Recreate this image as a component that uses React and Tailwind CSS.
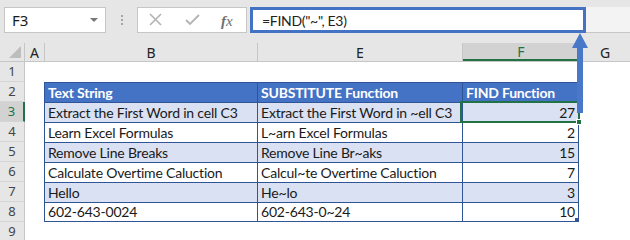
import React from "react";

const rows = [
  { n: 3, b: "Extract the First Word in cell C3", e: "Extract the First Word in ~ell C3", f: 27 },
  { n: 4, b: "Learn Excel Formulas", e: "L~arn Excel Formulas", f: 2 },
  { n: 5, b: "Remove Line Breaks", e: "Remove Line Br~aks", f: 15 },
  { n: 6, b: "Calculate Overtime Caluction", e: "Calcul~te Overtime Caluction", f: 7 },
  { n: 7, b: "Hello", e: "He~lo", f: 3 },
  { n: 8, b: "602-643-0024", e: "602-643-0~24", f: 10 },
];

const hdrFont = { fontFamily: "'Noto Sans', 'DejaVu Sans', sans-serif" };
const cellFont = { fontFamily: "Lato, 'Liberation Sans', sans-serif" };

function RowHeader({ n, active }) {
  return (
    <div
      className={
        "w-[25px] shrink-0 h-full flex items-center justify-center text-[13px] border-b border-[#d4d4d4] " +
        (active
          ? "bg-[#d2d2d2] text-[#217346] border-r-2 border-r-[#217346]"
          : "bg-[#e6e6e6] text-[#444] border-r border-r-[#c6c6c6]")
      }
      style={hdrFont}
    >
      {n}
    </div>
  );
}

function Cell({ children, className = "", last }) {
  return (
    <div
      className={
        "h-full shrink-0 border-l border-t border-[#2f5597] flex items-end px-[3px] pb-[1px] text-[14px] tracking-[-0.2px] leading-[17px] whitespace-nowrap overflow-hidden " +
        (last ? "border-b " : "") +
        className
      }
      style={cellFont}
    >
      {children}
    </div>
  );
}

export default function App() {
  return (
    <div className="relative w-[630px] h-[240px] overflow-hidden bg-white text-[#1a1a1a]">
      {/* formula bar */}
      <div className="h-[43px] bg-[#e6e6e6] flex items-start pt-[7px] pl-[4px]">
        <div
          className="w-[102px] h-[26px] bg-white border border-[#c6c6c6] flex items-center justify-between pl-[7px] pr-[7px] text-[15px]"
          style={hdrFont}
        >
          <span>F3</span>
          <span className="w-0 h-0 border-l-[4px] border-r-[4px] border-t-[4px] border-l-transparent border-r-transparent border-t-[#777]" />
        </div>
        <div className="w-[31px] h-[26px] flex flex-col items-center justify-center gap-[2px]">
          <span className="w-[2px] h-[2px] bg-[#a6a6a6]" />
          <span className="w-[2px] h-[2px] bg-[#a6a6a6]" />
          <span className="w-[2px] h-[2px] bg-[#a6a6a6]" />
        </div>
        <div className="w-[110px] h-[26px] bg-white border border-[#c6c6c6] flex items-center relative">
          <svg width="80" height="24" viewBox="0 0 80 24">
            <path d="M12 6 L23 17 M23 6 L12 17" stroke="#b3b3b3" strokeWidth="1.6" fill="none" />
            <path d="M48 12 L52 16 L61 7" stroke="#b3b3b3" strokeWidth="1.8" fill="none" />
          </svg>
          <span
            className="absolute left-[83px] top-[2px] text-[15px] italic text-[#6f6f6f]"
            style={{ fontFamily: "'Liberation Serif', serif" }}
          >
            <b>f</b>x
          </span>
        </div>
        <div className="w-[3px]" />
        <div
          className="w-[336px] h-[26px] bg-white border-[3px] border-[#4472c4] flex items-center pl-[9px] text-[14px] tracking-[-0.3px] text-[#222]"
          style={cellFont}
        >
          =FIND("~", E3)
        </div>
        <div className="flex-1 h-[26px] bg-[#f3f3f3] border-b border-[#c6c6c6]" />
      </div>

      {/* column headers */}
      <div className="h-[19px] flex bg-[#e6e6e6] border-b border-[#c6c6c6] text-[14px] text-[#222]" style={hdrFont}>
        <div className="w-[25px] h-full border-r border-[#c6c6c6] flex items-end justify-end p-[3px]">
          <span className="w-0 h-0 border-b-[12px] border-l-[12px] border-b-[#bdbdbd] border-l-transparent" />
        </div>
        <div className="w-[20px] h-full border-r border-[#c6c6c6] flex items-center justify-center">A</div>
        <div className="w-[213px] h-full border-r border-[#c6c6c6] flex items-center justify-center">B</div>
        <div className="w-[205px] h-full border-r border-[#c6c6c6] flex items-center justify-center">E</div>
        <div className="w-[116px] h-full bg-[#d2d2d2] border-b-2 border-[#217346] flex items-center justify-center text-[#217346]">F</div>
        <div className="flex-1 h-full border-l border-[#c6c6c6] flex items-center justify-center">G</div>
      </div>

      {/* row 1 */}
      <div className="h-[20px] flex">
        <RowHeader n={1} />
      </div>

      {/* row 2: table header */}
      <div className="h-[20px] flex">
        <RowHeader n={2} />
        <div className="w-[19px] shrink-0" />
        <Cell className="w-[213px] bg-[#4472c4] text-white font-bold">Text String</Cell>
        <Cell className="w-[205px] bg-[#4472c4] text-white font-bold">SUBSTITUTE Function</Cell>
        <Cell className="w-[117px] bg-[#4472c4] text-white font-bold border-r">FIND Function</Cell>
      </div>

      {rows.map((r, i) => {
        const band = i % 2 === 0 ? "bg-[#d9e1f2]" : "bg-white";
        const last = i === rows.length - 1;
        return (
          <div key={r.n} className="h-[20px] flex">
            <RowHeader n={r.n} active={r.n === 3} />
            <div className="w-[19px] shrink-0" />
            <Cell className={"w-[213px] " + band} last={last}>{r.b}</Cell>
            <Cell className={"w-[205px] " + band} last={last}>{r.e}</Cell>
            <Cell className={"w-[117px] justify-end border-r " + band} last={last}>{r.f}</Cell>
          </div>
        );
      })}

      {/* row 9 */}
      <div className="h-[20px] flex">
        <RowHeader n={9} />
      </div>

      {/* selection on F3 */}
      <div className="absolute left-[460px] top-[101px] w-[120px] h-[22px] border-2 border-[#217346]" />
      <div className="absolute left-[576px] top-[119px] w-[6px] h-[6px] bg-[#217346] border border-white" />
      <div className="absolute left-[575px] top-[218px] w-[4px] h-[4px] bg-[#2f5597]" />

      {/* arrow */}
      <svg className="absolute left-0 top-0" width="630" height="240" viewBox="0 0 630 240">
        <rect x="577" y="46" width="6" height="67" fill="#4a78c8" />
        <path d="M572 48 L580 33 L588 48 Z" fill="#4a78c8" />
      </svg>
    </div>
  );
}
